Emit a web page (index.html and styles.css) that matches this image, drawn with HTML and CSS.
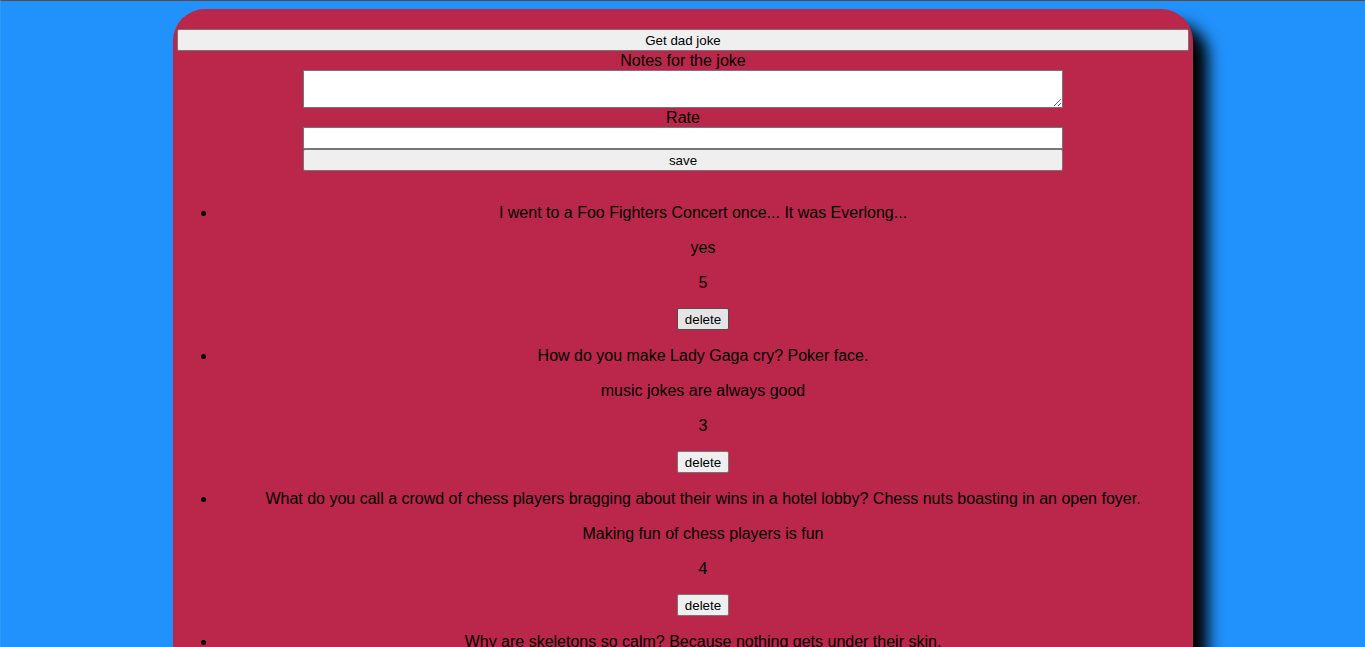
FILE: index.html
```html
<!DOCTYPE html>
<html lang="en">
<head>
  <meta charset="utf-8">
  <meta name="viewport" content="width=device-width, initial-scale=1">
  <title>Dad jokes</title>
  <link rel="stylesheet" href="styles.css">
</head>
<body>
  <main class="card">
    <button class="get-joke" type="button">Get dad joke</button>
    <form class="joke-form">
      <label for="notes">Notes for the joke</label>
      <textarea id="notes" class="notes" rows="2"></textarea>
      <label for="rate">Rate</label>
      <input id="rate" class="rate" type="text">
      <button type="button">save</button>
    </form>
    <ul class="jokes">
      <li>
        <p>I went to a Foo Fighters Concert once... It was Everlong...</p>
        <p>yes</p>
        <p>5</p>
        <button class="active" type="button">delete</button>
      </li>
      <li>
        <p>How do you make Lady Gaga cry? Poker face.</p>
        <p>music jokes are always good</p>
        <p>3</p>
        <button type="button">delete</button>
      </li>
      <li>
        <p>What do you call a crowd of chess players bragging about their wins in a hotel lobby? Chess nuts boasting in an open foyer.</p>
        <p>Making fun of chess players is fun</p>
        <p>4</p>
        <button type="button">delete</button>
      </li>
      <li>
        <p>Why are skeletons so calm? Because nothing gets under their skin.</p>
        <button type="button">delete</button>
      </li>
    </ul>
  </main>
</body>
</html>
```
FILE: styles.css
```css
* {
  box-sizing: border-box;
}

html {
  border-top: 1px solid #5a4a48;
  border-left: 1px solid #3399f8;
  background: #2191fb;
  scrollbar-width: none;
}

body {
  margin: 8px;
  font: 16px/19px "Liberation Sans", Arial, sans-serif;
  color: #000;
}

.card {
  display: flex;
  flex-direction: column;
  align-items: center;
  max-width: 1020px;
  margin: 0 auto;
  padding: 20px 4px;
  border-radius: 32px;
  background: #ba274a;
  box-shadow: 15px 15px 15px #000;
  text-align: center;
}

button {
  height: 22px;
  padding: 1px 7px;
  border: 1px solid #767676;
  border-radius: 2px;
  background: #efefef;
  color: #000;
  font-family: "Liberation Sans", Arial, sans-serif;
}

button:hover,
.active {
  border-color: #4f4f4f;
  background: #e5e5e5;
}

.get-joke {
  width: 100%;
}

.joke-form {
  display: flex;
  flex-direction: column;
  width: 90%;
  max-width: 760px;
}

.notes,
.rate {
  margin: 0;
  padding: 2px;
  border: 1px solid #767676;
  border-radius: 0;
  background: #fff;
  font-family: "Liberation Sans", Arial, sans-serif;
}

.notes {
  height: 38px;
  resize: both;
}

.rate {
  height: 22px;
}

.jokes {
  width: 100%;
  margin: 32px 0 16px;
  padding: 0 0 0 40px;
}

.jokes li {
  margin-bottom: 16px;
}

.jokes p {
  margin: 0 0 16px;
}
```
